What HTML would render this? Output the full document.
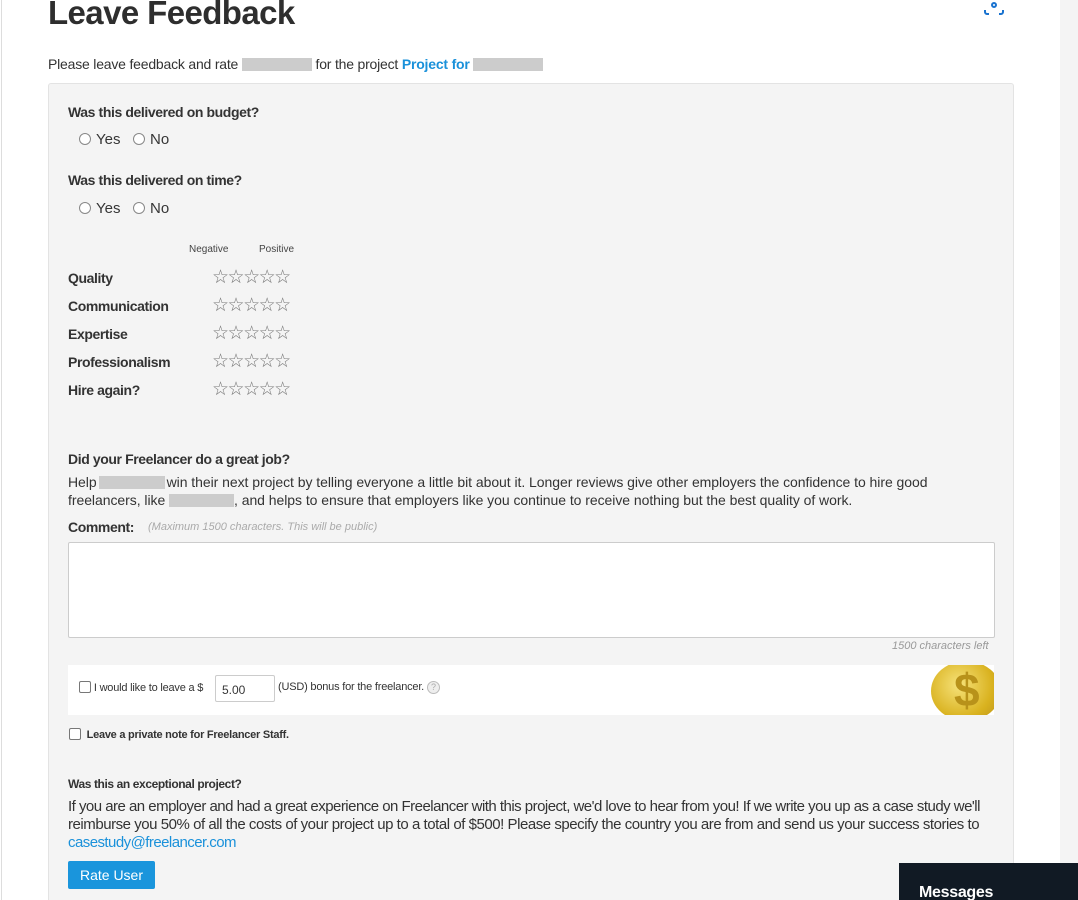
<!DOCTYPE html>
<html><head><meta charset="utf-8">
<style>
*{margin:0;padding:0;box-sizing:border-box}
html,body{width:1078px;height:900px;overflow:hidden}
body{background:#fff;font-family:"Liberation Sans",sans-serif;color:#363636;position:relative}
.a{position:absolute;white-space:nowrap}
.strip{position:absolute;left:1060px;top:0;width:18px;height:900px;background:#f4f4f4}
.lb{position:absolute;left:1px;top:0;width:1px;height:900px;background:#ddd}
.panel{position:absolute;left:48px;top:83px;width:966px;height:830px;background:#f4f4f4;border:1px solid #e3e3e3;border-radius:3px}
.b{font-weight:bold;font-size:14px;color:#333;letter-spacing:-0.4px}
.r{display:inline-block;width:12px;height:12px;border:1px solid #888;border-radius:50%;vertical-align:-1px;margin-right:5px;background:#fff}
.blank{display:inline-block;background:#ccc;height:13px;vertical-align:-2px}
.stars{font-size:19px;color:#777;letter-spacing:-1.5px}
.cb{display:inline-block;width:12px;height:12px;border:1px solid #777;border-radius:2px;background:#fff;vertical-align:-2px}
.n{letter-spacing:-0.5px}
</style></head><body>
<div class="lb"></div>
<div class="strip"></div>
<div class="a" style="left:48px;top:-6px;font-size:33px;font-weight:bold;color:#2e2e2e;letter-spacing:-0.6px">Leave Feedback</div>
<svg class="a" style="left:982px;top:-6px" width="24" height="24" viewBox="0 0 24 24" fill="none" stroke="#1a73d0" stroke-width="2"><path d="M3 6V4a2 2 0 0 1 2-2h2M17 2h2a2 2 0 0 1 2 2v2M3 16v2a2 2 0 0 0 2 2h2M17 20h2a2 2 0 0 0 2-2v-2"/><circle cx="12" cy="11" r="2"/></svg>
<div class="a" style="left:48px;top:56px;font-size:14px;color:#333;letter-spacing:-0.2px">Please leave feedback and rate <span class="blank" style="width:70px"></span> for the project <b style="color:#1a91da">Project for</b> <span class="blank" style="width:70px"></span></div>
<div class="panel"></div>
<div class="a b" style="left:68px;top:104px">Was this delivered on budget?</div>
<div class="a" style="left:79px;top:131px;font-size:15px"><span class="r"></span>Yes &nbsp; <span class="r"></span>No</div>
<div class="a b" style="left:68px;top:172px">Was this delivered on time?</div>
<div class="a" style="left:79px;top:200px;font-size:15px"><span class="r"></span>Yes &nbsp; <span class="r"></span>No</div>
<div class="a" style="left:189px;top:244px;font-size:10px;color:#444">Negative</div>
<div class="a" style="left:259px;top:244px;font-size:10px;color:#444">Positive</div>
<div class="a b" style="left:68px;top:270px">Quality</div><div class="a stars" style="left:212px;top:266px">☆☆☆☆☆</div>
<div class="a b" style="left:68px;top:298px">Communication</div><div class="a stars" style="left:212px;top:294px">☆☆☆☆☆</div>
<div class="a b" style="left:68px;top:326px">Expertise</div><div class="a stars" style="left:212px;top:322px">☆☆☆☆☆</div>
<div class="a b" style="left:68px;top:354px">Professionalism</div><div class="a stars" style="left:212px;top:350px">☆☆☆☆☆</div>
<div class="a b" style="left:68px;top:382px">Hire again?</div><div class="a stars" style="left:212px;top:378px">☆☆☆☆☆</div>
<div class="a b" style="left:68px;top:451px">Did your Freelancer do a great job?</div>
<div class="a" style="left:68px;top:474px;font-size:14px;color:#333;letter-spacing:-0.05px">Help<span class="blank" style="width:66px;margin:0 2px"></span>win their next project by telling everyone a little bit about it. Longer reviews give other employers the confidence to hire good</div>
<div class="a" style="left:68px;top:492px;font-size:14px;color:#333;letter-spacing:-0.05px">freelancers, like <span class="blank" style="width:65px"></span>, and helps to ensure that employers like you continue to receive nothing but the best quality of work.</div>
<div class="a b" style="left:68px;top:519px">Comment:</div>
<div class="a" style="left:148px;top:521px;font-size:11px;font-style:italic;color:#aaa">(Maximum 1500 characters. This will be public)</div>
<div class="a" style="left:68px;top:542px;width:927px;height:96px;background:#fff;border:1px solid #ccc;border-radius:2px"></div>
<div class="a" style="left:892px;top:640px;font-size:11px;font-style:italic;color:#999">1500 characters left</div>
<div class="a" style="left:68px;top:665px;width:926px;height:50px;background:#fff;overflow:hidden">
  <div class="a" style="left:11px;top:16px;font-size:11px;color:#333;letter-spacing:-0.2px"><span class="cb"></span> I would like to leave a $</div>
  <div class="a" style="left:147px;top:10px;width:60px;height:27px;border:1px solid #ccc;border-radius:2px;font-size:12px;padding:7px 0 0 6px">5.00</div>
  <div class="a" style="left:210px;top:16px;font-size:11px;color:#333;letter-spacing:-0.2px">(USD) bonus for the freelancer. <span style="display:inline-block;width:13px;height:13px;border:1px solid #bbb;border-radius:50%;font-size:9px;color:#aaa;text-align:center;line-height:11px;background:#eee">?</span></div>
  <div class="a" style="left:863px;top:-4px;width:70px;height:60px;border-radius:50%;background:radial-gradient(circle at 40% 40%,#f6e27a,#d9b21f 60%,#b8901a);"></div>
  <div class="a" style="left:886px;top:-2px;font-size:46px;font-weight:bold;color:#b8921a">$</div>
</div>
<div class="a" style="left:69px;top:728px;font-size:11px;font-weight:bold;color:#333;letter-spacing:-0.25px"><span class="cb"></span> &nbsp;Leave a private note for Freelancer Staff.</div>
<div class="a" style="left:68px;top:777px;font-size:12px;font-weight:bold;color:#333;letter-spacing:-0.4px">Was this an exceptional project?</div>
<div class="a" style="left:68px;top:798px;font-size:15px;color:#333;letter-spacing:-0.52px">If you are an employer and had a great experience on Freelancer with this project, we'd love to hear from you! If we write you up as a case study we'll</div>
<div class="a" style="left:68px;top:816px;font-size:15px;color:#333;letter-spacing:-0.46px">reimburse you 50% of all the costs of your project up to a total of $500! Please specify the country you are from and send us your success stories to</div>
<div class="a" style="left:68px;top:834px;font-size:15px;color:#1a91da;letter-spacing:-0.55px">casestudy@freelancer.com</div>
<div class="a" style="left:68px;top:861px;width:87px;height:28px;background:#1a95dc;border-radius:2px;color:#fff;font-size:14px;text-align:center;line-height:28px">Rate User</div>
<div class="a" style="left:899px;top:863px;width:179px;height:40px;background:#111a24;color:#fff;font-weight:bold;font-size:16px;padding:21px 0 0 20px;letter-spacing:-0.3px">Messages</div>
</body></html>
